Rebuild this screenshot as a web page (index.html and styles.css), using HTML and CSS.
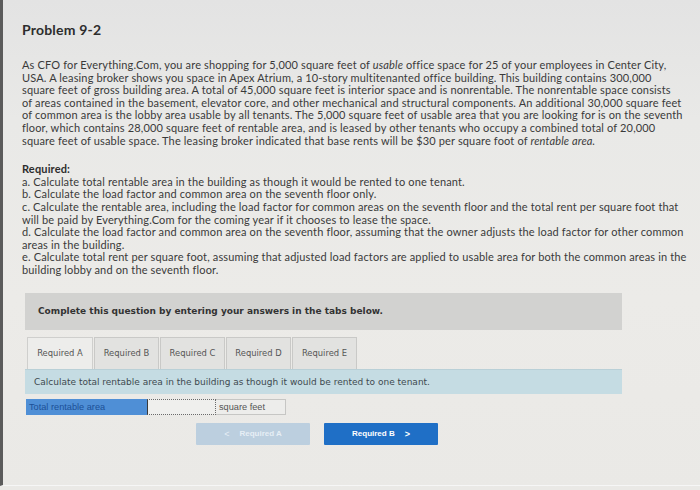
FILE: index.html
```html
<!DOCTYPE html>
<html>
<head>
<meta charset="utf-8">
<link rel="stylesheet" href="styles.css">
</head>
<body>
<div class="screen">
  <div class="content">
    <h1 class="title">Problem 9-2</h1>
    <p class="intro">As CFO for Everything.Com, you are shopping for 5,000 square feet of <em>usable</em> office space for 25 of your employees in Center City,<br>USA. A leasing broker shows you space in Apex Atrium, a 10-story multitenanted office building. This building contains 300,000<br>square feet of gross building area. A total of 45,000 square feet is interior space and is nonrentable. The nonrentable space consists<br>of areas contained in the basement, elevator core, and other mechanical and structural components. An additional 30,000 square feet<br>of common area is the lobby area usable by all tenants. The 5,000 square feet of usable area that you are looking for is on the seventh<br>floor, which contains 28,000 square feet of rentable area, and is leased by other tenants who occupy a combined total of 20,000<br>square feet of usable space. The leasing broker indicated that base rents will be $30 per square foot of <em>rentable area.</em></p>
    <div class="required">
      <div class="req-head">Required:</div>
      <div>a. Calculate total rentable area in the building as though it would be rented to one tenant.</div>
      <div>b. Calculate the load factor and common area on the seventh floor only.</div>
      <div>c. Calculate the rentable area, including the load factor for common areas on the seventh floor and the total rent per square foot that<br>will be paid by Everything.Com for the coming year if it chooses to lease the space.</div>
      <div>d. Calculate the load factor and common area on the seventh floor, assuming that the owner adjusts the load factor for other common<br>areas in the building.</div>
      <div>e. Calculate total rent per square foot, assuming that adjusted load factors are applied to usable area for both the common areas in the<br>building lobby and on the seventh floor.</div>
    </div>
  </div>
  <div class="question">
    <div class="banner">Complete this question by entering your answers in the tabs below.</div>
    <div class="tabs">
      <div class="tab active">Required A</div>
      <div class="tab">Required B</div>
      <div class="tab">Required C</div>
      <div class="tab">Required D</div>
      <div class="tab">Required E</div>
    </div>
    <div class="instruction">Calculate total rentable area in the building as though it would be rented to one tenant.</div>
    <div class="answer-row">
      <div class="label-cell">Total rentable area</div>
      <div class="input-cell"></div>
      <div class="unit-cell">square feet</div>
    </div>
    <div class="nav">
      <div class="btn prev"><span class="chev">&lt;</span>Required A</div>
      <div class="btn next">Required B<span class="chev">&gt;</span></div>
    </div>
  </div>
</div>
</body>
</html>
```

FILE: styles.css
```css
html, body {
  margin: 0;
  padding: 0;
}
body {
  width: 700px;
  height: 490px;
  overflow: hidden;
  background: linear-gradient(180deg, #e3e3e3 0px, #e9e9e7 120px, #ecebe8 300px, #eae9e6 490px);
}
.screen {
  height: 486px;
  border-left: 3px solid #5b5b5b;
  border-bottom: 1px solid #f6f6f6;
  box-sizing: border-box;
}
.content {
  width: 676px;
  padding: 21px 0 0 19px;
  font-family: "Lato", "Open Sans", sans-serif;
  color: #3a3a3a;
  font-size: 11px;
  line-height: 12.6px;
  letter-spacing: 0.15px;
  white-space: nowrap;
}
.title {
  margin: 0;
  font-size: 14px;
  line-height: 18px;
  font-weight: bold;
  color: #2d2d2d;
  letter-spacing: 0.2px;
}
.intro {
  margin: 20px 0 0 0;
}
.intro em {
  font-style: italic;
}
.required {
  margin-top: 16px;
}
.req-head {
  font-weight: bold;
  color: #2d2d2d;
}
.question {
  margin: 16px 0 0 22px;
  width: 597px;
  font-family: "DejaVu Sans", Verdana, sans-serif;
  font-size: 9px;
  color: #444;
}
.banner {
  background: #d2d2d0;
  height: 37px;
  display: flex;
  align-items: center;
  padding-left: 13px;
  font-weight: bold;
  color: #333;
}
.tabs {
  display: flex;
  margin-top: 7px;
  padding-left: 2px;
  gap: 1px;
}
.tab {
  height: 32px;
  box-sizing: border-box;
  border: 1px solid #c9c9c7;
  border-bottom: none;
  background: #e2e2e0;
  display: flex;
  align-items: center;
  justify-content: center;
  color: #555;
  width: 65px;
  font-size: 8.4px;
}
.tab.active {
  background: #ededeb;
  width: 66px;
  border-color: #cfcfcd;
}
.instruction {
  background: #c5dce3;
  height: 25px;
  display: flex;
  align-items: center;
  padding-left: 9px;
  color: #3e4a50;
  border-top: 1px solid #b9d0d7;
  box-sizing: border-box;
}
.answer-row {
  display: flex;
  margin-top: 5px;
  margin-left: 1px;
  height: 16px;
  font-family: "Liberation Sans", Arial, sans-serif;
  font-size: 9.2px;
}
.label-cell {
  width: 121px;
  background: #4f8fd6;
  color: #1c4f96;
  display: flex;
  align-items: center;
  padding-left: 3px;
  box-sizing: border-box;
}
.input-cell {
  width: 69px;
  border: 1px dotted #6a6a6a;
  border-left: 1px solid #3a3a3a;
  background: #efefed;
  box-sizing: border-box;
}
.unit-cell {
  width: 70px;
  border: 1px solid #c6c6c4;
  border-left: none;
  background: #ededeb;
  display: flex;
  align-items: center;
  padding-left: 3px;
  box-sizing: border-box;
  color: #555;
}
.nav {
  display: flex;
  margin-top: 8px;
  margin-left: 171px;
  gap: 14px;
}
.btn {
  width: 114px;
  height: 22px;
  display: flex;
  align-items: center;
  justify-content: center;
  font-family: "Liberation Sans", Arial, sans-serif;
  font-size: 8px;
  font-weight: bold;
  border-radius: 1px;
}
.btn.prev {
  background: #bccfdf;
  color: #e6eef5;
}
.btn.prev .chev {
  margin-right: 10px;
  font-weight: normal;
  font-size: 9px;
}
.btn.next {
  background: #1f6fc6;
  color: #ffffff;
}
.btn.next .chev {
  margin-left: 10px;
  font-size: 9px;
}
```
